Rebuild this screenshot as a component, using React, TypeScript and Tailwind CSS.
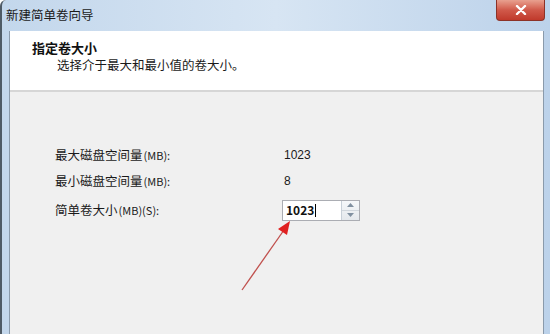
import React from "react";

const font = { fontFamily: '"Noto Sans CJK SC", "Noto Sans", sans-serif' };

const Arrow: React.FC = () => (
  <svg className="absolute left-0 top-0 pointer-events-none" width="550" height="334">
    <line x1="240" y1="290" x2="282" y2="230" stroke="#c0504d" strokeWidth="1.3" />
    <polygon points="288,221 276,229 285,235" fill="#e02020" />
  </svg>
);

const Spinner: React.FC = () => (
  <div className="w-[18px] h-full flex flex-col border-l border-[#c8d0d8] bg-gradient-to-b from-[#f6f8fa] to-[#e4e8ec]">
    <div className="flex-1 flex items-center justify-center border-b border-[#d0d6dc]">
      <svg width="7" height="4" viewBox="0 0 7 4">
        <polygon points="0,4 3.5,0 7,4" fill="#8090a0" />
      </svg>
    </div>
    <div className="flex-1 flex items-center justify-center">
      <svg width="7" height="4" viewBox="0 0 7 4">
        <polygon points="0,0 3.5,4 7,0" fill="#8090a0" />
      </svg>
    </div>
  </div>
);

export default function App() {
  return (
    <div
      className="relative w-[550px] h-[334px] overflow-hidden flex flex-col bg-gradient-to-r from-[#c3d7ec] via-[#d7e5f3] to-[#bcd2ea] border-l-2 border-[#4f5b66] rounded-tl-[6px]"
      style={font}
    >
      {/* title bar */}
      <div className="h-[31px] flex items-start shrink-0">
        <div className="pt-[9px] pl-[4px] text-[12.5px] leading-none text-[#1a1a1a]">新建简单卷向导</div>
        <div className="ml-auto mr-[5px] w-[49px] h-[21px] rounded-b-[4px] border border-t-0 border-[#8c3227] bg-gradient-to-b from-[#e8a08f] via-[#d0594a] to-[#c0392b] flex items-center justify-center">
          <svg width="12" height="10" viewBox="0 0 12 10">
            <path d="M2 1 L10 9 M10 1 L2 9" stroke="#ffffff" strokeWidth="2.4" strokeLinecap="round" />
          </svg>
        </div>
      </div>

      {/* client area */}
      <div className="flex-1 ml-[7px] mr-[6px] flex flex-col border-l border-r border-[#8a9aab] bg-[#f0f0f0]">
        <div className="h-[61px] bg-white border-b-2 border-[#d6d6d6] pl-[22px] pt-[10px] shrink-0">
          <div className="text-[13px] font-bold leading-none text-[#111]">指定卷大小</div>
          <div className="mt-[5px] pl-[25px] text-[12.5px] leading-none text-[#1a1a1a]">
            选择介于最大和最小值的卷大小。
          </div>
        </div>

        <div className="pl-[45px] pt-[50px] text-[12.5px] text-[#1a1a1a]">
          <div className="grid grid-cols-[227px_auto] items-center">
            <div className="h-[26px] flex items-center">
              最大磁盘空间量<span className="text-[11px] ml-[1px]">(MB):</span>
            </div>
            <div className="h-[26px] flex items-center pl-[2px] text-[12px] font-[Liberation_Sans]">1023</div>
            <div className="h-[26px] flex items-center">
              最小磁盘空间量<span className="text-[11px] ml-[1px]">(MB):</span>
            </div>
            <div className="h-[26px] flex items-center pl-[2px] text-[12px] font-[Liberation_Sans]">8</div>
            <div className="h-[32px] flex items-center">
              简单卷大小<span className="text-[11px] ml-[1px]">(MB)(S):</span>
            </div>
            <div className="h-[32px] flex items-center">
              <div className="w-[78px] h-[21px] flex border border-[#abadb3] bg-white">
                <div className="flex-1 flex items-center pl-[3px] text-[12px] font-bold text-[#111]">
                  1023<span className="ml-[1px] w-px h-[13px] bg-black" />
                </div>
                <Spinner />
              </div>
            </div>
          </div>
        </div>
      </div>

      <Arrow />
    </div>
  );
}
